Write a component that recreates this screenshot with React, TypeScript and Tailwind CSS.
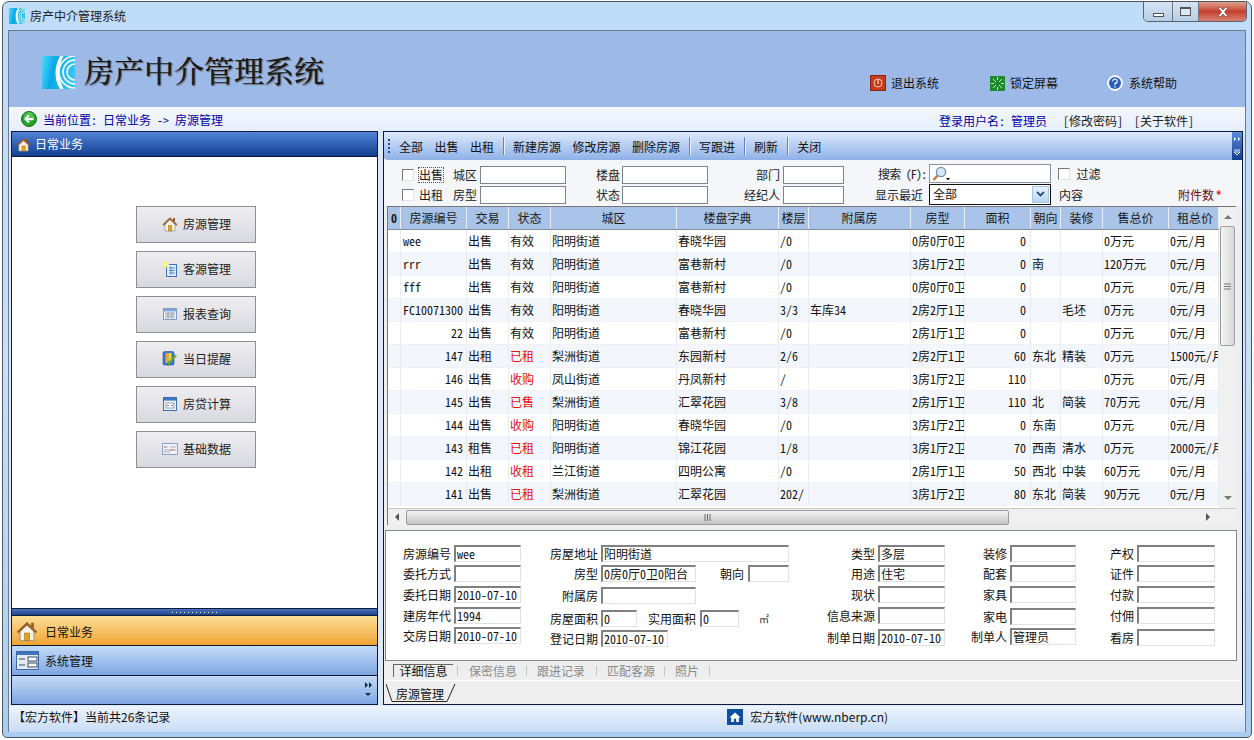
import { ReactNode } from "react";

const rows = [
  ["wee", "出售", "有效", "阳明街道", "春晓华园", "/0", "", "0房0厅0卫", "0", "", "", "0万元", "0元/月"],
  ["rrr", "出售", "有效", "阳明街道", "富巷新村", "/0", "", "3房1厅2卫", "0", "南", "", "120万元", "0元/月"],
  ["fff", "出售", "有效", "阳明街道", "富巷新村", "/0", "", "0房0厅0卫", "0", "", "", "0万元", "0元/月"],
  ["FC10071300", "出售", "有效", "阳明街道", "春晓华园", "3/3", "车库34", "2房2厅1卫", "0", "", "毛坯", "0万元", "0元/月"],
  ["22", "出售", "有效", "阳明街道", "富巷新村", "/0", "", "2房1厅1卫", "0", "", "", "0万元", "0元/月"],
  ["147", "出租", "已租", "梨洲街道", "东园新村", "2/6", "", "2房2厅1卫", "60", "东北", "精装", "0万元", "1500元/月"],
  ["146", "出售", "收购", "凤山街道", "丹凤新村", "/", "", "3房1厅2卫", "110", "", "", "0万元", "0元/月"],
  ["145", "出售", "已售", "梨洲街道", "汇翠花园", "3/8", "", "2房1厅1卫", "110", "北", "简装", "70万元", "0元/月"],
  ["144", "出售", "收购", "阳明街道", "春晓华园", "/0", "", "3房1厅2卫", "0", "东南", "", "0万元", "0元/月"],
  ["143", "租售", "已租", "阳明街道", "锦江花园", "1/8", "", "3房1厅2卫", "70", "西南", "清水", "0万元", "2000元/月"],
  ["142", "出租", "收租", "兰江街道", "四明公寓", "/0", "", "2房1厅1卫", "50", "西北", "中装", "60万元", "0元/月"],
  ["141", "出售", "已租", "梨洲街道", "汇翠花园", "202/", "", "3房1厅2卫", "80", "东北", "简装", "90万元", "0元/月"],
];

const heads = ["房源编号", "交易", "状态", "城区", "楼盘字典", "楼层", "附属房", "房型", "面积", "朝向", "装修", "售总价", "租总价"];
const gridCols = "grid grid-cols-[13px_66px_42px_42px_126px_102px_30px_102px_54px_66px_30px_42px_66px_50px]";
const redStatus = ["已租", "已售", "收购", "收租"];

function Logo({ id, size }: { id: string; size: number }) {
  return (
    <svg width={size} height={size} viewBox="0 0 33 33">
      <defs>
        <linearGradient id={id} x1="0" y1="0" x2="1" y2="0.2">
          <stop offset="0" stopColor="#4fdcf8" />
          <stop offset="0.4" stopColor="#0aa8ea" />
          <stop offset="1" stopColor="#38c4f0" />
        </linearGradient>
      </defs>
      <rect width="33" height="33" fill={`url(#${id})`} />
      <path d="M13 0h3.5Q12 8 12.5 17T16.5 33H13Q8 25 8.5 16T13 0Z" fill="#fff" opacity="0.95" transform="translate(5 0)" />
      <circle cx="33" cy="16" r="16" fill="none" stroke="#fff" strokeWidth="1.6" />
      <circle cx="33" cy="16" r="12" fill="none" stroke="#e8fbff" strokeWidth="1.8" />
      <circle cx="33" cy="16" r="8" fill="none" stroke="#fff" strokeWidth="1.6" />
    </svg>
  );
}

function House({ size }: { size: number }) {
  return (
    <svg width={size} height={size} viewBox="0 0 16 16">
      <path d="M11 2h2v4l-2-1.5Z" fill="#9a5a2a" />
      <path d="M3 8v7h10V8L8 3.5Z" fill="#f6f3e6" stroke="#8a8a78" strokeWidth="0.6" />
      <path d="M0.8 8.5 8 1.6l7.2 6.9-1 .9L8 3.6 1.8 9.4Z" fill="#a8662e" stroke="#6e4520" strokeWidth="0.4" />
      <rect x="6.3" y="9.5" width="3.6" height="5.5" fill="#e2a320" stroke="#8f6410" strokeWidth="0.4" />
    </svg>
  );
}

function CustomerIcon() {
  return (
    <svg width="16" height="16" viewBox="0 0 16 16">
      <rect x="4.5" y="3.5" width="10" height="12" fill="#dcecfb" stroke="#3f74b4" />
      <path d="M7 7h6M7 9.5h6M7 12h6M9 5.5v8" stroke="#3f74b4" strokeWidth="0.8" />
      <circle cx="3.5" cy="3.5" r="3" fill="#f6ea70" />
      <path d="M3.5 0v7M0 3.5h7" stroke="#fffbd0" strokeWidth="0.8" />
    </svg>
  );
}

function TableIcon() {
  return (
    <svg width="16" height="16" viewBox="0 0 16 16">
      <rect x="1.5" y="2.5" width="13" height="11" fill="#eef3fa" stroke="#7f9cc4" />
      <rect x="2" y="3" width="12" height="2.4" fill="#82a6da" />
      <path d="M3 7h10M3 9h10M3 11h10M6 6v7M10 6v7" stroke="#8a94a4" strokeWidth="0.8" />
    </svg>
  );
}

function PenIcon() {
  return (
    <svg width="16" height="16" viewBox="0 0 16 16">
      <rect x="1" y="0.5" width="11" height="13.5" rx="1.5" fill="#3b78d0" stroke="#234f96" strokeWidth="0.6" />
      <path d="M3.5 2h3v9l-3 1.5Z" fill="#f0a81c" />
      <path d="M6.5 2h3v6l-3 3Z" fill="#f4d82e" />
      <path d="M14.5 5 8 12.5l-2.2 2.4.5-3L13 4Z" fill="#7cc03a" stroke="#44801c" strokeWidth="0.5" />
    </svg>
  );
}

function CalcIcon() {
  return (
    <svg width="16" height="16" viewBox="0 0 16 16">
      <rect x="1.5" y="1.5" width="13" height="13" fill="#eef3f8" stroke="#3f6fa8" />
      <rect x="2" y="2" width="12" height="2.6" fill="#3a78c4" />
      <rect x="4" y="7" width="8" height="5" fill="#fff" stroke="#6c7c8c" strokeWidth="0.7" />
      <path d="M5 9.5h2M9 9.5h2" stroke="#556" strokeWidth="0.8" />
    </svg>
  );
}

function CardIcon({ size = 16 }: { size?: number }) {
  return (
    <svg width={size} height={size} viewBox="0 0 16 16">
      <rect x="0.5" y="2.5" width="15" height="11" fill="#eef2f8" stroke="#8ba2c4" />
      <path d="M2 6h4M8 6h6M2 9h12M2 11h6" stroke="#a0a8b4" strokeWidth="0.9" />
      <path d="M2 6h2M8 9h4" stroke="#d08040" strokeWidth="0.9" />
    </svg>
  );
}

function SystemIcon() {
  return (
    <svg width="23" height="19" viewBox="0 0 23 19">
      <rect x="0.5" y="0.5" width="22" height="18" fill="#e3ebf6" stroke="#3d6aa8" />
      <rect x="1" y="1" width="21" height="3" fill="#3d74bd" />
      <rect x="12" y="6" width="9" height="4" fill="#fff" stroke="#3a4a60" />
      <rect x="12" y="12" width="9" height="4" fill="#fff" stroke="#3a4a60" />
      <path d="M3 8h6M3 14h6" stroke="#3a4a60" strokeWidth="1.2" />
    </svg>
  );
}

function Chevrons() {
  return (
    <svg width="8" height="18" viewBox="0 0 8 18">
      <path d="M1 1l3 3-3 3ZM5 1l3 3-3 3Z" fill="#10264e" />
      <path d="M1 12h6l-3 3Z" fill="#10264e" />
    </svg>
  );
}

function SideButton({ icon, label }: { icon: ReactNode; label: string }) {
  return (
    <div className="flex h-[37px] w-[120px] items-center justify-center gap-[5px] border border-[#8f8f8f] bg-gradient-to-b from-[#eeeef2] via-[#e3e3e8] to-[#d8d8e0] pb-[2px] pl-[1px] text-[12px] text-[#222]">
      {icon}
      <span>{label}</span>
    </div>
  );
}

function Box({ className, value }: { className: string; value?: string }) {
  return (
    <div className={`h-[17px] overflow-hidden whitespace-nowrap border border-[#e2e2e2] border-t-2 border-l-2 border-t-[#808080] border-l-[#808080] bg-white pl-[1px] text-[12px] leading-[14px] text-[#111] ${className}`}>
      {value}
    </div>
  );
}

function Field({ label, labelClass, boxClass, value, rowClass, children }: { label: string; labelClass: string; boxClass: string; value?: string; rowClass?: string; children?: ReactNode }) {
  return (
    <div className={`flex h-[17px] items-center ${rowClass ?? ""}`}>
      <span className={`shrink-0 text-right text-[12px] text-[#111] ${labelClass}`}>{label}</span>
      <Box className={`ml-[3px] shrink-0 ${boxClass}`} value={value} />
      {children}
    </div>
  );
}

function Check({ className }: { className?: string }) {
  return <span className={`block h-[12px] w-[12px] shrink-0 border border-[#e4e4e4] border-t-[#777] border-l-[#777] bg-white ${className ?? ""}`} />;
}

function FilterInput({ label, labelClass, boxClass }: { label: string; labelClass: string; boxClass: string }) {
  return (
    <>
      <span className={`shrink-0 text-right text-[12px] text-[#222] ${labelClass}`}>{label}</span>
      <span className={`ml-[2px] block h-[18px] shrink-0 border border-[#7b8590] bg-white ${boxClass}`} />
    </>
  );
}

function ToolItem({ label }: { label: string }) {
  return <span className="pt-[2px] text-[12px] text-[#111]">{label}</span>;
}

function ToolSep() {
  return <span className="mx-[9px] h-[18px] w-[1px] bg-[#5f84c0] shadow-[1px_0_0_#e8f0fc]" />;
}

export default function App() {
  return (
    <div className="h-[740px] w-[1254px] overflow-hidden bg-white pl-[2px] pt-[1px] font-['Noto_Sans_Mono_CJK_SC','Noto_Sans_CJK_SC',sans-serif]">
      <div className="relative flex h-[737px] w-[1250px] flex-col rounded-t-[7px] rounded-b-[5px] border border-[#50565e] bg-gradient-to-b from-[#bfdcf8] via-[#c8e0f8] to-[#a9cdf0] px-[5px] pb-[5px]">
        {/* title bar */}
        <div className="flex h-[28px] shrink-0 items-center pl-[1px] text-[12px] text-[#222]">
          <Logo id="logoSmall" size={16} />
          <span className="ml-[5px]">房产中介管理系统</span>
        </div>
        <div className="absolute right-[4px] top-0 flex h-[20px] overflow-hidden rounded-b-[5px] border border-t-0 border-[#5a6470] text-[#333]">
          <div className="flex w-[28px] items-end justify-center bg-gradient-to-b from-[#d6e4f4] to-[#b8cde4] pb-[4px]">
            <span className="block h-[4px] w-[11px] border border-[#555] bg-white" />
          </div>
          <div className="flex w-[27px] items-center justify-center border-x border-[#6b7684] bg-gradient-to-b from-[#d6e4f4] to-[#b8cde4]">
            <span className="block h-[9px] w-[11px] border border-[#555] border-t-2 bg-[#dce8f4]" />
          </div>
          <div className="flex w-[47px] items-center justify-center bg-gradient-to-b from-[#e0a090] via-[#c4402c] to-[#d88070]">
            <svg width="12" height="10" viewBox="0 0 12 10">
              <path d="M1 0.5h2.6L6 3l2.4-2.5H11L7.5 5 11 9.5H8.4L6 7 3.6 9.5H1L4.5 5Z" fill="#fff" stroke="#6a4040" strokeWidth="0.6" />
            </svg>
          </div>
        </div>

        {/* client area */}
        <div className="flex h-[702px] flex-col border border-b-0 border-[#6b7c90] bg-[#dce8f8]">
          {/* header */}
          <div className="flex h-[76px] shrink-0 bg-[#9cb9e8]">
            <div className="ml-[33px] mt-[25px]">
              <Logo id="logoBig" size={33} />
            </div>
            <div className="ml-[9px] mt-[20px] h-[36px] font-['Noto_Serif_CJK_SC','Noto_Sans_CJK_SC',sans-serif] text-[30px] font-medium leading-[36px] text-[#1a1a1a] [text-shadow:1px_1px_1px_#666]">
              房产中介管理系统
            </div>
            <div className="ml-auto mt-[43px] flex items-center self-start text-[12px] text-[#111]">
              <svg width="16" height="16" viewBox="0 0 16 16">
                <rect x="0.5" y="0.5" width="15" height="15" fill="#c83a1c" stroke="#8c2410" />
                <circle cx="8" cy="8" r="4" fill="none" stroke="#f8d8b8" />
                <path d="M8 5v4" stroke="#f8d8b8" strokeWidth="1.2" />
              </svg>
              <span className="ml-[5px]">退出系统</span>
              <svg className="ml-[51px]" width="15" height="15" viewBox="0 0 15 15">
                <rect width="15" height="15" fill="#1e8a2c" />
                <path d="M3 3l3 3M12 3L9 6M3 12l3-3M12 12L9 9M7.5 1v3M7.5 11v3M1 7.5h3M11 7.5h3" stroke="#b8f0b0" strokeWidth="1" />
              </svg>
              <span className="ml-[5px]">锁定屏幕</span>
              <svg className="ml-[49px]" width="16" height="16" viewBox="0 0 16 16">
                <circle cx="8" cy="8" r="7.5" fill="#fff" stroke="#e8f0fa" />
                <circle cx="8" cy="8" r="6" fill="#2a5fc0" />
                <path d="M5.8 6.3A2.2 2.2 0 1 1 8 8.4V10M8 11v1.4" stroke="#fff" strokeWidth="1.2" fill="none" />
              </svg>
              <span className="ml-[6px] mr-[68px]">系统帮助</span>
            </div>
          </div>

          {/* location strip */}
          <div className="flex h-[24px] shrink-0 items-center bg-gradient-to-b from-[#f4f7fd] to-[#e6eefb] text-[12px] text-[#0000a8]">
            <svg className="ml-[12px]" width="16" height="16" viewBox="0 0 16 16">
              <circle cx="8" cy="8" r="7.5" fill="#22a52c" stroke="#107018" />
              <circle cx="8" cy="6" r="5" fill="#6fd36a" opacity="0.6" />
              <path d="M12.5 8H5M8 4.5 4.5 8 8 11.5" stroke="#fff" strokeWidth="2" fill="none" />
            </svg>
            <span className="ml-[6px] whitespace-pre pt-[2px]">当前位置: 日常业务 -&gt; 房源管理</span>
            <span className="ml-auto pt-[4px]">登录用户名: 管理员</span>
            <span className="ml-[16px] pt-[4px] text-[#222]">[修改密码]</span>
            <span className="ml-[11px] mr-[51px] pt-[4px] text-[#222]">[关于软件]</span>
          </div>

          {/* main */}
          <div className="flex h-[575px] shrink-0 gap-[5px] pl-[2px] pr-[2px]">
            {/* left panel */}
            <div className="flex h-[574px] w-[367px] shrink-0 flex-col border border-[#0b1b3d] bg-white">
              <div className="flex h-[25px] shrink-0 items-center border-b border-[#0b1b3d] bg-gradient-to-b from-[#5384d8] to-[#123f90] pl-[4px] text-[12px] text-white">
                <House size={15} />
                <span className="ml-[4px]">日常业务</span>
              </div>
              <div className="flex flex-1 flex-col gap-[8px] pl-[124px] pt-[49px]">
                <SideButton icon={<House size={16} />} label="房源管理" />
                <SideButton icon={<CustomerIcon />} label="客源管理" />
                <SideButton icon={<TableIcon />} label="报表查询" />
                <SideButton icon={<PenIcon />} label="当日提醒" />
                <SideButton icon={<CalcIcon />} label="房贷计算" />
                <SideButton icon={<CardIcon />} label="基础数据" />
              </div>
              <div className="flex h-[8px] shrink-0 items-center justify-center gap-[3px] border-y border-[#0b1b3d] bg-gradient-to-b from-[#4a74c0] to-[#1f4488]">
                {Array.from({ length: 12 }).map((_, i) => (
                  <span key={i} className="block h-[1px] w-[1px] bg-white" />
                ))}
              </div>
              <div className="flex h-[30px] shrink-0 items-center border-b border-[#0b1b3d] bg-gradient-to-b from-[#fbdf96] to-[#f0a42c] pl-[4px] text-[12px] text-[#111]">
                <House size={22} />
                <span className="ml-[7px] pt-[2px]">日常业务</span>
              </div>
              <div className="flex h-[30px] shrink-0 items-center border-b border-[#0b1b3d] bg-gradient-to-b from-[#c5dbf6] to-[#7fa6e2] pl-[4px] text-[12px] text-[#111]">
                <SystemIcon />
                <span className="ml-[6px]">系统管理</span>
              </div>
              <div className="flex h-[28px] shrink-0 items-center justify-end bg-gradient-to-b from-[#c5dbf6] to-[#7fa6e2] pr-[5px]">
                <Chevrons />
              </div>
            </div>

            {/* right panel */}
            <div className="flex h-[574px] w-[860px] shrink-0 flex-col border border-[#0b1b3d] bg-[#eeeeee]">
              {/* toolbar */}
              <div className="flex h-[28px] shrink-0 items-center rounded-bl-[4px] bg-gradient-to-b from-[#dde9fb] to-[#8fb1e8] pl-[3px]">
                <svg width="3" height="16" viewBox="0 0 3 16">
                  <path d="M1 1h2v2H1ZM1 5h2v2H1ZM1 9h2v2H1ZM1 13h2v2H1Z" fill="#23508f" />
                </svg>
                <div className="ml-[9px] flex gap-[11.5px]">
                  <ToolItem label="全部" />
                  <ToolItem label="出售" />
                  <ToolItem label="出租" />
                </div>
                <ToolSep />
                <div className="flex gap-[11.5px]">
                  <ToolItem label="新建房源" />
                  <ToolItem label="修改房源" />
                  <ToolItem label="删除房源" />
                </div>
                <ToolSep />
                <ToolItem label="写跟进" />
                <ToolSep />
                <ToolItem label="刷新" />
                <ToolSep />
                <ToolItem label="关闭" />
                <div className="ml-auto flex h-[28px] w-[10px] items-center justify-center bg-gradient-to-b from-[#5b8cdc] to-[#123f90]">
                  <svg width="8" height="20" viewBox="0 0 8 20">
                    <path d="M1 1l2 2-2 2ZM5 1l2 2-2 2Z" fill="#fff" />
                    <path d="M1 14h6M1 16h6l-3 3Z" fill="none" stroke="#fff" strokeWidth="0.9" />
                  </svg>
                </div>
              </div>

              {/* filter */}
              <div className="flex h-[46px] shrink-0 flex-col gap-[2px] bg-[#f4f6fa] pt-[6px]">
                <div className="flex h-[18px] items-center">
                  <Check className="ml-[18px]" />
                  <span className="ml-[5px] text-[12px] leading-[14px] text-[#222] outline-1 outline-dotted outline-[#555]">出售</span>
                  <span className="ml-[10px] text-[12px] text-[#222]">城区</span>
                  <span className="ml-[3px] block h-[18px] w-[86px] shrink-0 border border-[#7b8590] bg-white" />
                  <FilterInput label="楼盘" labelClass="w-[54px]" boxClass="w-[86px]" />
                  <FilterInput label="部门" labelClass="w-[72px]" boxClass="ml-[3px] w-[61px]" />
                  <span className="ml-[34px] mb-[3px] text-[12px] tracking-[-0.8px] text-[#222]">搜索 (F):</span>
                  <div className="relative mb-[3px] ml-[3px] flex h-[19px] w-[122px] shrink-0 items-center border border-[#8a94a0] bg-white pl-[2px]">
                    <svg width="18" height="16" viewBox="0 0 18 16">
                      <circle cx="9" cy="6" r="4.6" fill="#d6e8fa" stroke="#6f8fb4" strokeWidth="1.3" />
                      <path d="M5.5 9.5 1.5 14" stroke="#c07a40" strokeWidth="2.4" />
                      <path d="M14 12h4l-2 2.4Z" fill="#111" />
                    </svg>
                  </div>
                  <Check className="ml-[7px] mb-[3px]" />
                  <span className="ml-[6px] mb-[3px] text-[12px] text-[#222]">过滤</span>
                </div>
                <div className="flex h-[18px] items-center">
                  <Check className="ml-[18px]" />
                  <span className="ml-[5px] text-[12px] text-[#222]">出租</span>
                  <span className="ml-[10px] text-[12px] text-[#222]">房型</span>
                  <span className="ml-[3px] block h-[18px] w-[86px] shrink-0 border border-[#7b8590] bg-white" />
                  <FilterInput label="状态" labelClass="w-[54px]" boxClass="w-[86px]" />
                  <FilterInput label="经纪人" labelClass="w-[72px]" boxClass="ml-[3px] w-[61px]" />
                  <span className="ml-[31px] text-[12px] text-[#222]">显示最近</span>
                  <div className="mb-[2px] ml-[6px] flex h-[21px] w-[122px] shrink-0 items-center justify-between border border-[#111] bg-white pl-[3px] pr-[1px] text-[12px] text-[#111]">
                    <span>全部</span>
                    <span className="flex h-[17px] w-[17px] items-center justify-center border border-[#a8c4e0] bg-gradient-to-b from-[#e6f2fc] to-[#b8d6f2]">
                      <svg width="9" height="7" viewBox="0 0 9 7">
                        <path d="M1 1l3.5 3.5L8 1" fill="none" stroke="#2a4f80" strokeWidth="1.8" />
                      </svg>
                    </span>
                  </div>
                  <span className="ml-[8px] text-[12px] text-[#222]">内容</span>
                  <span className="ml-[95px] text-[12px] text-[#6a0a14]">附件数</span>
                  <span className="ml-[1px] text-[15px] leading-[15px] text-[#e01020]">*</span>
                </div>
              </div>

              {/* grid */}
              <div className="ml-[3px] flex h-[319px] w-[849px] shrink-0 flex-col border-l border-t border-[#777] bg-[#f0f0f0]">
                <div className="flex h-[301px] shrink-0">
                  <div className="h-[301px] w-[831px] shrink-0 overflow-hidden bg-white">
                    <div className={`${gridCols} h-[23px] border-b border-[#7f8ea4] bg-[#a9c4e8] text-[12px] leading-[22px] text-[#1a1a1a]`}>
                      <div className="border-r border-[#e6eefa] text-center font-bold">0</div>
                      {heads.map((h, i) => (
                        <div key={h} className={`overflow-hidden whitespace-nowrap border-r border-[#e6eefa] text-center ${i === 12 ? "pl-[3px]" : ""}`}>
                          {h}
                        </div>
                      ))}
                    </div>
                    {rows.map((row, r) => (
                      <div key={r} className={`${gridCols} h-[23px] border-b border-[#f0f2f6] text-[12px] leading-[22px] text-[#111] ${r % 2 === 1 ? "bg-[#f4f6fd]" : "bg-white"}`}>
                        <div className="border-r border-[#e8ecf0]" />
                        {row.map((cell, c) => (
                          <div
                            key={c}
                            className={`overflow-hidden whitespace-nowrap border-r border-[#e8ecf0] ${c === 0 && !/^\d+$/.test(cell) ? "pl-[2px]" : ""} ${c === 0 && /^\d+$/.test(cell) ? "pr-[3px] text-right" : ""} ${c === 8 ? "pr-[4px] text-right" : ""} ${c !== 0 && c !== 8 ? "pl-[1px]" : ""} ${c === 2 && redStatus.includes(cell) ? "text-[#e01010]" : ""}`}
                          >
                            {cell}
                          </div>
                        ))}
                      </div>
                    ))}
                  </div>
                  {/* vertical scrollbar */}
                  <div className="flex h-[301px] flex-1 flex-col items-center bg-[#f0f0f0]">
                    <svg className="mt-[7px]" width="8" height="5" viewBox="0 0 8 5">
                      <path d="M0 5l4-4 4 4Z" fill="#777" />
                    </svg>
                    <div className="mt-[7px] flex h-[120px] w-[15px] items-center justify-center rounded-[2px] border border-[#a0a0a0] bg-gradient-to-r from-[#f4f4f4] to-[#d8d8d8]">
                      <svg width="7" height="7" viewBox="0 0 7 7">
                        <path d="M0 1h7M0 3.5h7M0 6h7" stroke="#777" />
                      </svg>
                    </div>
                    <svg className="mt-auto mb-[7px]" width="8" height="5" viewBox="0 0 8 5">
                      <path d="M0 0l4 4 4-4Z" fill="#777" />
                    </svg>
                  </div>
                </div>
                {/* horizontal scrollbar */}
                <div className="flex h-[17px] shrink-0 items-center border-t border-[#c8c8c8] bg-[#f0f0f0] pl-[6px]">
                  <svg width="5" height="8" viewBox="0 0 5 8">
                    <path d="M5 0 1 4l4 4Z" fill="#555" />
                  </svg>
                  <div className="ml-[7px] flex h-[15px] w-[603px] items-center justify-center rounded-[2px] border border-[#9a9a9a] bg-gradient-to-b from-[#f4f4f4] to-[#c4c4c4]">
                    <svg width="7" height="7" viewBox="0 0 7 7">
                      <path d="M1 0v7M3.5 0v7M6 0v7" stroke="#666" />
                    </svg>
                  </div>
                  <svg className="ml-[197px]" width="5" height="8" viewBox="0 0 5 8">
                    <path d="M0 0l4 4-4 4Z" fill="#555" />
                  </svg>
                </div>
              </div>

              {/* detail card */}
              <div className="ml-[1px] mt-[5px] flex h-[131px] w-[852px] shrink-0 border border-[#808890] bg-white pt-[14px]">
                <div className="flex w-[139px] shrink-0 flex-col">
                  <Field label="房源编号" labelClass="w-[65px]" boxClass="w-[67px]" value="wee" />
                  <Field label="委托方式" labelClass="w-[65px]" boxClass="w-[67px]" rowClass="mt-[3px]" />
                  <Field label="委托日期" labelClass="w-[65px]" boxClass="w-[67px]" value="2010-07-10" rowClass="mt-[4px]" />
                  <Field label="建房年代" labelClass="w-[65px]" boxClass="w-[67px]" value="1994" rowClass="mt-[4px]" />
                  <Field label="交房日期" labelClass="w-[65px]" boxClass="w-[67px]" value="2010-07-10" rowClass="mt-[3px]" />
                </div>
                <div className="flex w-[275px] shrink-0 flex-col">
                  <Field label="房屋地址" labelClass="w-[73px]" boxClass="w-[188px]" value="阳明街道" />
                  <Field label="房型" labelClass="w-[73px]" boxClass="w-[95px]" value="0房0厅0卫0阳台" rowClass="mt-[3px]">
                    <span className="w-[48px] shrink-0 text-right text-[12px] text-[#111]">朝向</span>
                    <Box className="ml-[4px] w-[41px] shrink-0" />
                  </Field>
                  <Field label="附属房" labelClass="w-[73px]" boxClass="w-[95px]" rowClass="mt-[5px]" />
                  <Field label="房屋面积" labelClass="w-[73px]" boxClass="w-[36px]" value="0" rowClass="mt-[6px]">
                    <span className="w-[59px] shrink-0 text-right text-[12px] text-[#111]">实用面积</span>
                    <Box className="ml-[4px] w-[39px] shrink-0" value="0" />
                    <span className="ml-[20px] text-[10px] text-[#333]">㎡</span>
                  </Field>
                  <Field label="登记日期" labelClass="w-[73px]" boxClass="w-[67px]" value="2010-07-10" rowClass="mt-[3px]" />
                </div>
                <div className="flex w-[150px] shrink-0 flex-col">
                  <Field label="类型" labelClass="w-[75px]" boxClass="w-[67px]" value="多层" />
                  <Field label="用途" labelClass="w-[75px]" boxClass="w-[67px]" value="住宅" rowClass="mt-[3px]" />
                  <Field label="现状" labelClass="w-[75px]" boxClass="w-[67px]" rowClass="mt-[4px]" />
                  <Field label="信息来源" labelClass="w-[75px]" boxClass="w-[67px]" rowClass="mt-[4px]" />
                  <Field label="制单日期" labelClass="w-[75px]" boxClass="w-[67px]" value="2010-07-10" rowClass="mt-[5px]" />
                </div>
                <div className="flex w-[130px] shrink-0 flex-col">
                  <Field label="装修" labelClass="w-[57px]" boxClass="w-[66px]" />
                  <Field label="配套" labelClass="w-[57px]" boxClass="w-[66px]" rowClass="mt-[3px]" />
                  <Field label="家具" labelClass="w-[57px]" boxClass="w-[66px]" rowClass="mt-[4px]" />
                  <Field label="家电" labelClass="w-[57px]" boxClass="w-[66px]" rowClass="mt-[5px]" />
                  <Field label="制单人" labelClass="w-[57px]" boxClass="w-[66px]" value="管理员" rowClass="mt-[3px]" />
                </div>
                <div className="flex w-[135px] shrink-0 flex-col">
                  <Field label="产权" labelClass="w-[54px]" boxClass="w-[78px]" />
                  <Field label="证件" labelClass="w-[54px]" boxClass="w-[78px]" rowClass="mt-[3px]" />
                  <Field label="付款" labelClass="w-[54px]" boxClass="w-[78px]" rowClass="mt-[4px]" />
                  <Field label="付佣" labelClass="w-[54px]" boxClass="w-[78px]" rowClass="mt-[4px]" />
                  <Field label="看房" labelClass="w-[54px]" boxClass="w-[78px]" rowClass="mt-[5px]" />
                </div>
              </div>

              {/* detail tabs */}
              <div className="flex h-[20px] shrink-0 items-center border-b border-white text-[12px] text-[#8a8a8a]">
                <span className="ml-[9px] h-[13px] w-[60px] border-l border-t border-[#666] text-center leading-[12px] text-[#111]">详细信息</span>
                <span className="ml-[4px] h-[10px] w-[1px] bg-[#c4c4c4]" />
                <span className="ml-[11px]">保密信息</span>
                <span className="ml-[9px] h-[10px] w-[1px] bg-[#c4c4c4]" />
                <span className="ml-[10px]">跟进记录</span>
                <span className="ml-[11px] h-[10px] w-[1px] bg-[#c4c4c4]" />
                <span className="ml-[10px]">匹配客源</span>
                <span className="ml-[9px] h-[10px] w-[1px] bg-[#c4c4c4]" />
                <span className="ml-[10px]">照片</span>
                <span className="ml-[10px] h-[10px] w-[1px] bg-[#c4c4c4]" />
              </div>

              {/* document tab */}
              <div className="relative flex h-[22px] flex-1 items-center pl-[12px] pt-[2px] text-[12px] text-[#111]">
                <svg className="absolute left-[2px] top-[3px]" width="72" height="19" viewBox="0 0 72 19">
                  <path d="M0 0 6 17.5H61L69 0" fill="none" stroke="#222" strokeWidth="1" />
                </svg>
                <span className="relative">房源管理</span>
              </div>
            </div>
          </div>

          {/* status bar */}
          <div className="flex h-[26px] shrink-0 items-center bg-gradient-to-b from-[#eef4fd] to-[#c8dcf5] pb-[4px] text-[12px] text-[#111]">
            <span className="ml-[4px] font-['Noto_Sans_CJK_SC',sans-serif]">【宏方软件】当前共26条记录</span>
            <svg className="ml-[557px]" width="16" height="16" viewBox="0 0 16 16">
              <rect width="16" height="16" fill="#0f4fa0" />
              <path d="M2.5 8.5 8 3.5l5.5 5h-1.7V13H9.2V9.8H6.8V13H4.2V8.5Z" fill="#fff" />
            </svg>
            <span className="ml-[7px] font-['Noto_Sans_CJK_SC',sans-serif]">宏方软件(www.nberp.cn)</span>
          </div>
        </div>
      </div>
    </div>
  );
}
